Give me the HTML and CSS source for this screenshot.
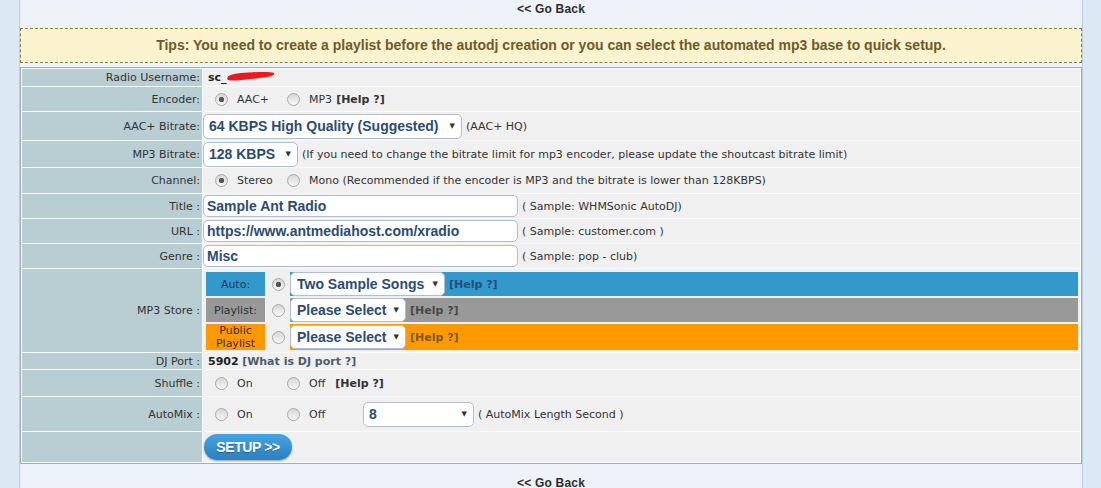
FILE: index.html
```html
<!DOCTYPE html>
<html>
<head>
<meta charset="utf-8">
<title>AutoDJ Setup</title>
<link rel="stylesheet" href="styles.css">
</head>
<body>
<div class="page">
  <div class="back top"><a href="#">&lt;&lt; Go Back</a></div>
  <div class="tips">Tips: You need to create a playlist before the autodj creation or you can select the automated mp3 base to quick setup.</div>
  <table class="form">
    <tr class="r17">
      <th>Radio Username:</th>
      <td><span class="txt"><b>sc_</b><svg class="redact" width="48" height="10" viewBox="0 0 48 10"><path d="M1 5.5 C4 2.5 14 1.5 26 1.2 C36 0.8 44 0.6 47 2 C48 3.5 46 5 40 6 C32 7.2 20 8.6 10 9.4 C5 9.8 1.5 9.6 0.5 8.5 C0 7.5 0.2 6.5 1 5.5 Z" fill="#ea1a20"/></svg></span></td>
    </tr>
    <tr class="r24">
      <th>Encoder:</th>
      <td><label class="opt first"><input class="rad" type="radio" name="enc" checked><span>AAC+</span></label><label class="opt"><input class="rad" type="radio" name="enc"><span>MP3</span></label><b class="help">[Help ?]</b></td>
    </tr>
    <tr class="r28">
      <th>AAC+ Bitrate:</th>
      <td><span class="sel w259"><select><option>64 KBPS High Quality (Suggested)</option></select></span><span class="note">(AAC+ HQ)</span></td>
    </tr>
    <tr class="r26">
      <th>MP3 Bitrate:</th>
      <td><span class="sel w95"><select><option>128 KBPS</option></select></span><span class="note">(If you need to change the bitrate limit for mp3 encoder, please update the shoutcast bitrate limit)</span></td>
    </tr>
    <tr class="r25">
      <th>Channel:</th>
      <td><label class="opt first"><input class="rad" type="radio" name="ch" checked><span>Stereo</span></label><label class="opt"><input class="rad" type="radio" name="ch"><span>Mono (Recommended if the encoder is MP3 and the bitrate is lower than 128KBPS)</span></label></td>
    </tr>
    <tr class="r24">
      <th>Title :</th>
      <td><input class="inp" type="text" value="Sample Ant Radio"><span class="note">( Sample: WHMSonic AutoDJ)</span></td>
    </tr>
    <tr class="r24">
      <th>URL :</th>
      <td><input class="inp" type="text" value="https://www.antmediahost.com/xradio"><span class="note">( Sample: customer.com )</span></td>
    </tr>
    <tr class="r24">
      <th>Genre :</th>
      <td><input class="inp" type="text" value="Misc"><span class="note">( Sample: pop - club)</span></td>
    </tr>
    <tr class="r83">
      <th>MP3 Store :</th>
      <td class="store">
        <table class="sub">
          <tr class="auto">
            <td class="sl">Auto:</td>
            <td class="sr"><input class="rad" type="radio" name="store" checked></td>
            <td class="sv"><span class="sel w155 s24"><select><option>Two Sample Songs</option></select></span><b class="shelp">[Help ?]</b></td>
          </tr>
          <tr class="plist">
            <td class="sl">Playlist:</td>
            <td class="sr"><input class="rad" type="radio" name="store"></td>
            <td class="sv"><span class="sel w116 s24"><select><option>Please Select</option></select></span><b class="shelp">[Help ?]</b></td>
          </tr>
          <tr class="pub">
            <td class="sl">Public<br>Playlist</td>
            <td class="sr"><input class="rad" type="radio" name="store"></td>
            <td class="sv"><span class="sel w116 s24"><select><option>Please Select</option></select></span><b class="shelp">[Help ?]</b></td>
          </tr>
        </table>
      </td>
    </tr>
    <tr class="r16">
      <th>DJ Port :</th>
      <td><span class="txt"><b>5902</b> <b class="what">[What is DJ port ?]</b></span></td>
    </tr>
    <tr class="r26">
      <th>Shuffle :</th>
      <td><label class="opt first"><input class="rad" type="radio" name="sh"><span>On</span></label><label class="opt"><input class="rad" type="radio" name="sh"><span>Off</span></label><b class="help gap">[Help ?]</b></td>
    </tr>
    <tr class="r34">
      <th>AutoMix :</th>
      <td><label class="opt first"><input class="rad" type="radio" name="mix"><span>On</span></label><label class="opt second"><input class="rad" type="radio" name="mix"><span>Off</span></label><span class="sel w111"><select><option>8</option></select></span><span class="note">( AutoMix Length Second )</span></td>
    </tr>
    <tr class="r30">
      <th></th>
      <td><button class="setup" type="button">SETUP &gt;&gt;</button></td>
    </tr>
  </table>
  <div class="back bottom"><a href="#">&lt;&lt; Go Back</a></div>
</div>
</body>
</html>
```

FILE: styles.css
```css
* { box-sizing: border-box; }
html, body { margin: 0; padding: 0; }
body {
  background: #dce8f4;
  font-family: "DejaVu Sans", Verdana, sans-serif;
  font-size: 11px;
  color: #333;
  height: 488px;
  overflow: hidden;
}
.page {
  margin: 0 18px 0 19px;
  border-left: 1px solid #b7cde3;
  border-right: 1px solid #b7cde3;
  background: #eef3f9;
  height: 488px;
}
.back {
  text-align: center;
  font: bold 12px "Liberation Sans", Arial, sans-serif;
  line-height: 14px;
}
.back a { color: #2e2e2e; text-decoration: none; letter-spacing: 0.2px; }
.back.top { height: 28px; padding-top: 2px; }
.back.bottom { padding-top: 12px; }

.tips {
  height: 35px;
  border: 1px dashed #8b7d4e;
  background: #faf3cd;
  color: #6f5a2c;
  font: bold 14px "Liberation Sans", Arial, sans-serif;
  line-height: 33px;
  text-align: center;
  margin-bottom: 4px;
}

.form {
  width: 100%;
  border: 1px solid #a3afb8;
  border-spacing: 1px;
  background: #f8fafa;
}
.form > tbody > tr > th {
  width: 180px;
  background: #b9ced2;
  font-weight: normal;
  text-align: right;
  padding: 0 2px 0 0;
  white-space: nowrap;
  color: #333;
}
.form > tbody > tr > td {
  background: #f0f0f0;
  padding: 0;
  white-space: nowrap;
  vertical-align: middle;
}
.r16 > th, .r16 > td { height: 16px; }
.r17 > th, .r17 > td { height: 17px; }
.r24 > th, .r24 > td { height: 24px; }
.r25 > th, .r25 > td { height: 25px; }
.r26 > th, .r26 > td { height: 26px; }
.r28 > th, .r28 > td { height: 28px; }
.r30 > th, .r30 > td { height: 30px; }
.r34 > th, .r34 > td { height: 34px; }
.r83 > th, .r83 > td { height: 83px; }

.txt { margin-left: 5px; color: #222; }
.redact { vertical-align: middle; margin-left: 0; position: relative; top: -2px; }
.what { color: #4d5c6c; }

.rad {
  -webkit-appearance: none;
  appearance: none;
  width: 13px;
  height: 13px;
  margin: 0;
  border: 1px solid #a9a9a9;
  border-radius: 50%;
  background: linear-gradient(#d6d6d6, #f8f8f8);
  vertical-align: middle;
  flex: none;
}
.rad:checked {
  background: radial-gradient(circle, #565656 0 2.4px, transparent 3px), linear-gradient(#d6d6d6, #f8f8f8);
}

.opt {
  display: inline-flex;
  align-items: center;
  gap: 9px;
  vertical-align: middle;
}
.opt.first { width: 84px; padding-left: 12px; }
.opt.second { width: 76px; }
.help { color: #333; margin-left: 4px; vertical-align: middle; }
.help.gap { margin-left: 10px; }
.note { margin-left: 4px; vertical-align: middle; }

.sel { position: relative; display: inline-block; vertical-align: middle; }
.sel select {
  -webkit-appearance: none;
  appearance: none;
  display: block;
  width: 100%;
  height: 25px;
  border: 1px solid #aebfcf;
  border-radius: 5px;
  background: #fff;
  font: bold 14px "Liberation Sans", Arial, sans-serif;
  color: #2b4c70;
  padding: 0 0 0 5px;
  margin: 0;
}
.sel::after {
  content: "\25BC";
  position: absolute;
  right: 7px;
  top: 50%;
  transform: translateY(-50%);
  font-size: 7px;
  color: #333;
  pointer-events: none;
}
.sel.s24 select { height: 24px; padding-left: 6px; }
.w259 { width: 259px; }
.w95 { width: 95px; }
.w155 { width: 155px; }
.w116 { width: 116px; }
.w111 { width: 111px; }

.inp {
  width: 315px;
  height: 22px;
  border: 1px solid #aebfcf;
  border-radius: 5px;
  padding: 0 3px;
  margin: 0;
  font: bold 14px "Liberation Sans", Arial, sans-serif;
  color: #2b4c70;
  background: #fff;
  vertical-align: middle;
}

.form > tbody > tr > td.store { padding: 1px 2px 0 3px; }
.sub { width: 100%; border-spacing: 0 2px; }
.sub td { padding: 0; height: 24px; vertical-align: middle; }
.sub tr.pub td { height: 26px; }
.sub .sl { width: 59px; text-align: center; line-height: 13px; }
.sub .sr { width: 25px; padding-left: 7px; }
.sub .sr .rad { display: block; }
.sub .sv { white-space: nowrap; }
.shelp { margin-left: 4px; vertical-align: middle; }

.auto .sl, .auto .sv { background: #3399cc; }
.auto .sl { color: #1d3a55; }
.auto .shelp { color: #1f4f7a; }
.plist .sl, .plist .sv { background: #999999; }
.plist .sl { color: #2e2e2e; }
.plist .shelp { color: #484848; }
.pub .sl, .pub .sv { background: #ff9900; }
.pub .sl { color: #3a2a00; }
.pub .shelp { color: #7a5a1a; }

.setup {
  display: block;
  margin-left: 1px;
  width: 88px;
  height: 26px;
  border: 0;
  border-radius: 13px;
  background: linear-gradient(#45a5e2, #2a7fc0);
  color: #fff;
  font: bold 14px "Liberation Sans", Arial, sans-serif;
  letter-spacing: -0.4px;
  text-shadow: 0 1px 1px rgba(0, 0, 0, 0.3);
  box-shadow: 0 1px 2px rgba(0, 0, 0, 0.35);
  padding: 0;
}
```
